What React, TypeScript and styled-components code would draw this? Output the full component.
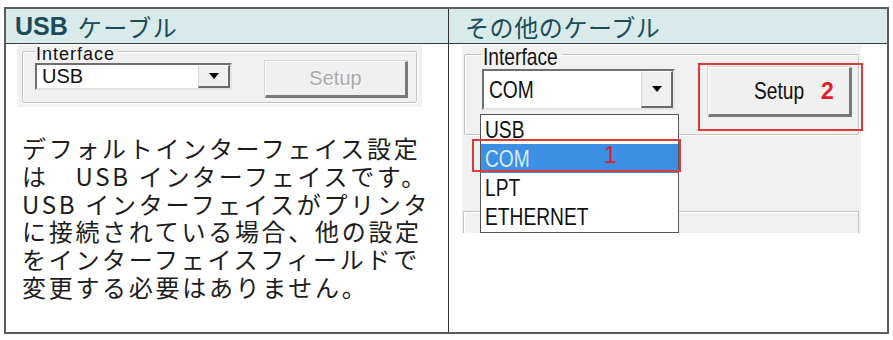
import React from "react";
import styled, { createGlobalStyle } from "styled-components";

const JP = `"Noto Sans CJK JP", "Noto Sans", sans-serif`;
const WIN = `"Liberation Sans", Arial, sans-serif`;

const GlobalStyle = createGlobalStyle`
  body {
    margin: 0;
    background: #fff;
  }
`;

const Table = styled.div`
  box-sizing: border-box;
  margin: 7px 0 0 4px;
  width: 885px;
  height: 327px;
  display: grid;
  grid-template-columns: 443px 1fr;
  grid-template-rows: 35px 1fr;
  border: 2px solid #5c5c5c;
`;

const HeadCell = styled.div<{ $pad: number; $divider?: boolean }>`
  display: flex;
  align-items: center;
  padding-left: ${(p) => p.$pad}px;
  background: #d8eaea;
  border-bottom: 1px solid #3c3c3c;
  border-right: ${(p) => (p.$divider ? "1px solid #333" : "none")};
  color: #1d4b58;
  font-family: ${JP};
  font-size: 24px;
  white-space: nowrap;
`;

const HeadLatin = styled.span`
  font-family: ${WIN};
  font-weight: 700;
  font-size: 25px;
  margin-right: 10px;
`;

const HeadKana = styled.span<{ $spacing: number }>`
  letter-spacing: ${(p) => p.$spacing}px;
`;

const BodyCell = styled.div<{ $pad: number; $divider?: boolean }>`
  display: flex;
  flex-direction: column;
  padding-left: ${(p) => p.$pad}px;
  padding-top: 1px;
  border-right: ${(p) => (p.$divider ? "1px solid #333" : "none")};
`;

/* ---------- windows dialog screenshots ---------- */

const Shot = styled.div<{ $w: number; $h: number }>`
  position: relative;
  box-sizing: border-box;
  width: ${(p) => p.$w}px;
  height: ${(p) => p.$h}px;
  background: #f1f1f1;
  font-family: ${WIN};
  display: flex;
  flex-direction: column;
  align-items: flex-start;
`;

const Group = styled.fieldset<{ $ml: number; $pl: number; $pt: number; $pb: number; $w: number }>`
  box-sizing: border-box;
  margin: 0 0 0 ${(p) => p.$ml}px;
  width: ${(p) => p.$w}px;
  padding: ${(p) => p.$pt}px 0 ${(p) => p.$pb}px ${(p) => p.$pl}px;
  border: 1px solid #c4c4c4;
  border-radius: 2px;
  box-shadow: inset 1px 1px 0 #fff, 1px 1px 0 #fff;
  display: flex;
  align-items: flex-start;
`;

const Legend = styled.legend<{ $size: number; $padTop: number; $lh: number; $w: number; $spacing?: number }>`
  box-sizing: content-box;
  width: ${(p) => p.$w}px;
  padding: ${(p) => p.$padTop}px 1px 0 1px;
  margin-left: 0;
  line-height: ${(p) => p.$lh}px;
  font-size: ${(p) => p.$size}px;
  letter-spacing: ${(p) => p.$spacing ?? 0}px;
  color: #111;
  white-space: nowrap;
`;

const Cond = styled.span<{ $scale: number; $w: number }>`
  display: inline-block;
  width: ${(p) => p.$w}px;
  white-space: nowrap;
  transform: scaleX(${(p) => p.$scale});
  transform-origin: left center;
`;

const Combo = styled.div<{ $w: number; $h: number }>`
  box-sizing: border-box;
  display: flex;
  width: ${(p) => p.$w}px;
  height: ${(p) => p.$h}px;
  background: #fff;
  border: 2px solid;
  border-color: #6f6f6f #e4e4e4 #e4e4e4 #6f6f6f;
`;

const ComboText = styled.div<{ $size: number }>`
  flex: 1;
  display: flex;
  align-items: center;
  padding-left: 5px;
  font-size: ${(p) => p.$size}px;
  color: #111;
`;

const DropButton = styled.div<{ $w: number }>`
  box-sizing: border-box;
  width: ${(p) => p.$w}px;
  display: flex;
  align-items: center;
  justify-content: center;
  background: #f0f0f0;
  border-top: 1px solid #fff;
  border-left: 1px solid #d8d8d8;
  border-right: 2px solid #6a6a6a;
  border-bottom: 2px solid #6a6a6a;
`;

const Arrow = styled.span`
  width: 0;
  height: 0;
  border-left: 5px solid transparent;
  border-right: 5px solid transparent;
  border-top: 6px solid #000;
`;

const Button = styled.div<{ $w: number; $h: number; $ml: number; $disabled?: boolean }>`
  box-sizing: border-box;
  width: ${(p) => p.$w}px;
  height: ${(p) => p.$h}px;
  margin: -2px 0 0 ${(p) => p.$ml}px;
  display: flex;
  align-items: center;
  background: #f0f0f0;
  border-top: 1px solid #fff;
  border-left: 1px solid #fff;
  border-right: 3px solid #7a7a7a;
  border-bottom: 3px solid #7a7a7a;
  box-shadow: -1px -1px 0 #d6d6d6;
  color: ${(p) => (p.$disabled ? "#aaa" : "#111")};
  text-shadow: ${(p) => (p.$disabled ? "1px 1px 0 #fff" : "none")};
`;

const LeftButtonLabel = styled.span`
  flex: 1;
  text-align: center;
  font-size: 20px;
`;

const RightButtonLabel = styled.div`
  display: flex;
  align-items: center;
  padding-left: 45px;
  font-size: 24px;
`;

const RedNumber = styled.span<{ $bold?: boolean }>`
  color: #e0202a;
  font-family: ${WIN};
  font-weight: ${(p) => (p.$bold ? 700 : 400)};
  font-size: 23px;
`;

const SecondGroup = styled.div`
  box-sizing: border-box;
  margin: 76px 0 0 1px;
  width: 396px;
  height: 22px;
  border: 1px solid #c4c4c4;
  border-bottom: none;
  box-shadow: inset 1px 1px 0 #fff;
`;

const DropList = styled.div`
  position: absolute;
  left: 18px;
  top: 69px;
  box-sizing: border-box;
  width: 199px;
  height: 119px;
  background: #fff;
  border: 1px solid #555;
  display: flex;
  flex-direction: column;
`;

const ListItem = styled.div<{ $active?: boolean }>`
  height: 29px;
  display: flex;
  align-items: center;
  padding-left: 4px;
  font-size: 24px;
  background: ${(p) => (p.$active ? "#3c8fe2" : "transparent")};
  color: ${(p) => (p.$active ? "#d6ebff" : "#111")};
`;

const Mark = styled.div<{ $l: number; $t: number; $w: number; $h: number }>`
  position: absolute;
  left: ${(p) => p.$l}px;
  top: ${(p) => p.$t}px;
  width: ${(p) => p.$w}px;
  height: ${(p) => p.$h}px;
  box-sizing: border-box;
  border: 2px solid #dd3b3b;
  display: flex;
  align-items: center;
`;

const MarkLabel = styled.span`
  margin-left: 130px;
`;

/* ---------- description text ---------- */

const Description = styled.p`
  margin: 27px 0 0 5px;
  font-family: ${JP};
  font-size: 24px;
  letter-spacing: 2.7px;
  line-height: 27.8px;
  color: #1c1c1c;
  white-space: nowrap;
`;

const App: React.FC = () => {
  return (
    <>
      <GlobalStyle />
      <Table>
        <HeadCell $pad={9} $divider>
          <HeadLatin>USB</HeadLatin>
          <HeadKana $spacing={1.5}>ケーブル</HeadKana>
        </HeadCell>
        <HeadCell $pad={16}>
          <HeadKana $spacing={0.6}>その他のケーブル</HeadKana>
        </HeadCell>

        <BodyCell $pad={11} $divider>
          <Shot $w={405} $h={62}>
            <Group $ml={5} $w={395} $pl={12} $pt={6} $pb={4}>
              <Legend $size={18} $padTop={6} $lh={6} $w={80} $spacing={1}>
                Interface
              </Legend>
              <Combo $w={197} $h={27}>
                <ComboText $size={20}>USB</ComboText>
                <DropButton $w={32}>
                  <Arrow />
                </DropButton>
              </Combo>
              <Button $w={143} $h={37} $ml={33} $disabled>
                <LeftButtonLabel>Setup</LeftButtonLabel>
              </Button>
            </Group>
          </Shot>
          <Description>
            デフォルトインターフェイス設定
            <br />
            は　USB インターフェイスです。
            <br />
            USB インターフェイスがプリンタ
            <br />
            に接続されている場合、他の設定
            <br />
            をインターフェイスフィールドで
            <br />
            変更する必要はありません。
          </Description>
        </BodyCell>

        <BodyCell $pad={13}>
          <Shot $w={399} $h={188}>
            <Group $ml={2} $w={395} $pl={17} $pt={6} $pb={17}>
              <Legend $size={24} $padTop={6} $lh={12} $w={78}>
                <Cond $scale={0.8} $w={78}>
                  Interface
                </Cond>
              </Legend>
              <Combo $w={193} $h={41}>
                <ComboText $size={24}>
                  <Cond $scale={0.8} $w={46}>
                    COM
                  </Cond>
                </ComboText>
                <DropButton $w={32}>
                  <Arrow />
                </DropButton>
              </Combo>
              <Button $w={144} $h={50} $ml={33}>
                <RightButtonLabel>
                  <Cond $scale={0.8} $w={67}>
                    Setup
                  </Cond>
                  <RedNumber $bold>2</RedNumber>
                </RightButtonLabel>
              </Button>
            </Group>
            <SecondGroup />

            <DropList>
              <ListItem>
                <Cond $scale={0.8} $w={42}>
                  USB
                </Cond>
              </ListItem>
              <ListItem $active>
                <Cond $scale={0.8} $w={46}>
                  COM
                </Cond>
              </ListItem>
              <ListItem>
                <Cond $scale={0.8} $w={40}>
                  LPT
                </Cond>
              </ListItem>
              <ListItem>
                <Cond $scale={0.8} $w={110}>
                  ETHERNET
                </Cond>
              </ListItem>
            </DropList>

            <Mark $l={10} $t={94} $w={209} $h={33}>
              <MarkLabel>
                <RedNumber>1</RedNumber>
              </MarkLabel>
            </Mark>
            <Mark $l={236} $t={18} $w={165} $h={68} />
          </Shot>
        </BodyCell>
      </Table>
    </>
  );
};

export default App;
